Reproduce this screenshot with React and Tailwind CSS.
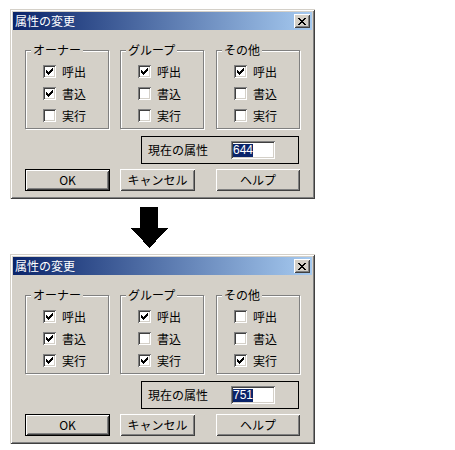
const FONT = "font-['Noto_Sans_CJK_JP','Noto_Sans_CJK_SC',sans-serif]";

const first = {
    value: '644',
    groups: [
        { label: 'オーナー', checks: [true, true, false] },
        { label: 'グループ', checks: [true, false, false] },
        { label: 'その他', checks: [true, false, false] },
    ],
};

const second = {
    value: '751',
    groups: [
        { label: 'オーナー', checks: [true, true, true] },
        { label: 'グループ', checks: [true, false, true] },
        { label: 'その他', checks: [false, false, true] },
    ],
};

const rights = ['呼出', '書込', '実行'];

function CheckMark() {
    return (
        <svg width="7" height="7" viewBox="0 0 7 7" shapeRendering="crispEdges">
            <path
                d="M0 2h1v3h-1z M1 3h1v3h-1z M2 4h1v3h-1z M3 3h1v3h-1z M4 2h1v3h-1z M5 1h1v3h-1z M6 0h1v3h-1z"
                fill="#000"
            />
        </svg>
    );
}

function CloseGlyph() {
    return (
        <svg width="8" height="7" viewBox="0 0 8 7" shapeRendering="crispEdges">
            <path
                d="M0 0h2v1h-2z M6 0h2v1h-2z M1 1h2v1h-2z M5 1h2v1h-2z M2 2h4v1h-4z M3 3h2v1h-2z M2 4h4v1h-4z M1 5h2v1h-2z M5 5h2v1h-2z M0 6h2v1h-2z M6 6h2v1h-2z"
                fill="#000"
            />
        </svg>
    );
}

function Checkbox({ checked, label }) {
    return (
        <div className="flex items-center h-[13px]">
            <div className="w-[13px] h-[13px] bg-white flex items-center justify-center shadow-[inset_1px_1px_0_#808080,inset_-1px_-1px_0_#ffffff,inset_2px_2px_0_#404040,inset_-2px_-2px_0_#d4d0c8]">
                {checked && <CheckMark />}
            </div>
            <span className="ml-[6px] text-[12px] leading-[14px] text-black">{label}</span>
        </div>
    );
}

function Group({ label, checks }) {
    return (
        <div className="relative w-[84px] h-[79px] border border-[#808080] shadow-[inset_1px_1px_0_#ffffff,1px_1px_0_#ffffff]">
            {/* label sits over the etched top line */}
            <span className="absolute left-[5px] -top-[8px] px-[2px] bg-[#d4d0c8] text-[12px] leading-[14px] text-black">
                {label}
            </span>
            <div className="flex flex-col gap-[9px] pl-[17px] pt-[14px]">
                {checks.map((c, i) => (
                    <Checkbox key={i} checked={c} label={rights[i]} />
                ))}
            </div>
        </div>
    );
}

function Button({ children, width, isDefault }) {
    const raised =
        'shadow-[inset_1px_1px_0_#ffffff,inset_-1px_-1px_0_#404040,inset_2px_2px_0_#d4d0c8,inset_-2px_-2px_0_#808080]';
    return (
        <div className={`h-[22px] ${width} ${isDefault ? 'border border-black' : ''}`}>
            <div className={`w-full h-full flex items-center justify-center bg-[#d4d0c8] text-[12px] leading-[14px] text-black ${raised}`}>
                {children}
            </div>
        </div>
    );
}

function Dialog({ data }) {
    return (
        <div className={`w-[305px] h-[190px] bg-[#d4d0c8] p-[3px] ${FONT} shadow-[inset_1px_1px_0_#d4d0c8,inset_-1px_-1px_0_#404040,inset_2px_2px_0_#ffffff,inset_-2px_-2px_0_#808080]`}>
            {/* title bar */}
            <div className="h-[18px] flex items-center justify-between pl-[2px] pr-[2px] bg-[linear-gradient(to_right,#0a246a,#a6caf0)]">
                <span className="text-[12px] leading-[14px] text-white">属性の変更</span>
                <div className="w-[16px] h-[14px] bg-[#d4d0c8] flex items-center justify-center shadow-[inset_1px_1px_0_#ffffff,inset_-1px_-1px_0_#404040,inset_2px_2px_0_#d4d0c8,inset_-2px_-2px_0_#808080]">
                    <CloseGlyph />
                </div>
            </div>

            {/* permission groups */}
            <div className="flex mt-[20px] ml-[12px]">
                <Group {...data.groups[0]} />
                <div className="ml-[11px]">
                    <Group {...data.groups[1]} />
                </div>
                <div className="ml-[12px]">
                    <Group {...data.groups[2]} />
                </div>
            </div>

            {/* current attribute */}
            <div className="mt-[7px] ml-[128px] w-[158px] h-[28px] border border-black flex items-center pl-[6px]">
                <span className="w-[60px] text-[12px] leading-[14px] text-black whitespace-nowrap">現在の属性</span>
                <div className="ml-[23px] w-[44px] h-[18px] bg-white flex items-center pl-[2px] shadow-[inset_1px_1px_0_#808080,inset_-1px_-1px_0_#ffffff,inset_2px_2px_0_#404040,inset_-2px_-2px_0_#d4d0c8]">
                    <span className="bg-[#0a246a] text-white text-[12px] leading-[13px] font-['Liberation_Sans',sans-serif]">
                        {data.value}
                    </span>
                </div>
            </div>

            {/* buttons */}
            <div className="flex mt-[5px] ml-[12px]">
                <Button width="w-[85px]" isDefault>OK</Button>
                <div className="ml-[10px]">
                    <Button width="w-[75px]">キャンセル</Button>
                </div>
                <div className="ml-[21px]">
                    <Button width="w-[84px]">ヘルプ</Button>
                </div>
            </div>
        </div>
    );
}

function DownArrow() {
    return (
        <svg width="37" height="41" viewBox="0 0 37 41" shapeRendering="crispEdges">
            <path d="M9 0h18v21h10l-18.5 20L0 21h9z" fill="#000" />
        </svg>
    );
}

export default function App() {
    return (
        <div className="w-[455px] h-[450px] bg-white pt-[9px] pl-[10px]">
            <Dialog data={first} />
            <div className="mt-[8px] ml-[121px]">
                <DownArrow />
            </div>
            <div className="mt-[6px]">
                <Dialog data={second} />
            </div>
        </div>
    );
}
